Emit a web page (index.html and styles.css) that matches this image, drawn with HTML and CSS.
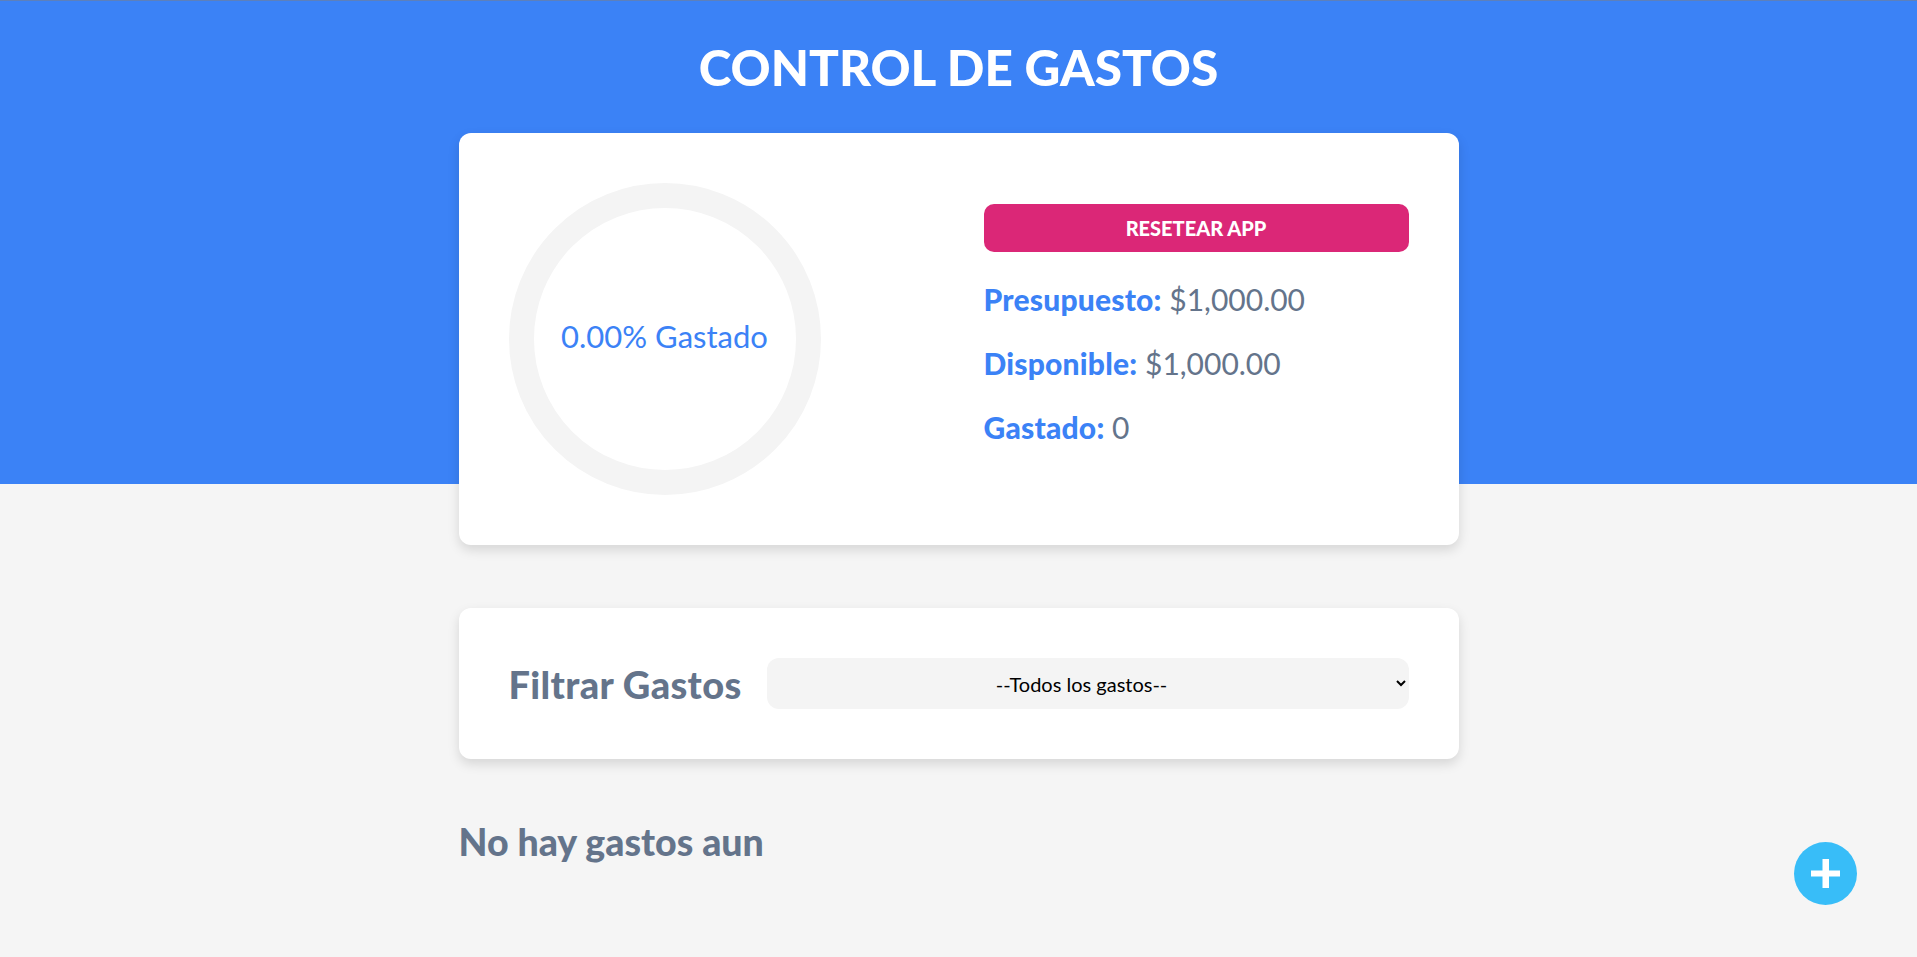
FILE: index.html
```html
<!DOCTYPE html>
<html lang="es">
<head>
<meta charset="UTF-8">
<title>Control de Gastos</title>
<link rel="stylesheet" href="styles.css">
</head>
<body>
<header class="header">
  <h1 class="title">CONTROL DE GASTOS</h1>
</header>
<main class="container">
  <section class="card budget">
    <div class="progress">
      <span class="progress-text">0.00% Gastado</span>
    </div>
    <div class="budget-info">
      <button class="reset" type="button">Resetear App</button>
      <p class="stat"><span class="stat-label">Presupuesto:</span> $1,000.00</p>
      <p class="stat"><span class="stat-label">Disponible:</span> $1,000.00</p>
      <p class="stat"><span class="stat-label">Gastado:</span> 0</p>
    </div>
  </section>
  <section class="card filters">
    <label class="filter-label" for="filtro">Filtrar Gastos</label>
    <select id="filtro" class="filter-select">
      <option>--Todos los gastos--</option>
    </select>
  </section>
  <h2 class="empty">No hay gastos aun</h2>
</main>
<button class="add" type="button" aria-label="Nuevo gasto">
  <svg width="29" height="29" viewBox="0 0 29 29"><rect x="11.5" y="0" width="6.5" height="29" fill="#fff"/><rect x="0" y="11.5" width="29" height="6" fill="#fff"/></svg>
</button>
</body>
</html>
```
FILE: styles.css
```css
* { box-sizing: border-box; }
body {
  margin: 0;
  font-family: Lato, "Noto Sans", sans-serif;
  background: #f5f5f5;
  border-top: 1px solid #5d80bb;
}
.header {
  background: #3b82f6;
  padding: 36px 0 387px;
}
.title {
  margin: 0;
  text-align: center;
  color: #fff;
  font-size: 49.5px;
  font-weight: 900;
  line-height: 60px;
}
.container {
  width: 1000px;
  margin: -351px auto 0;
}
.card {
  background: #fff;
  border-radius: 12px;
  padding: 50px;
  box-shadow: 0 5px 12px rgba(0, 0, 0, 0.13);
}
.budget {
  display: grid;
  grid-template-columns: 1fr 1fr;
  gap: 50px;
  align-items: center;
}
.progress {
  width: 312px;
  height: 312px;
  border: 25px solid #f4f4f4;
  border-radius: 50%;
  display: flex;
  align-items: center;
  justify-content: center;
}
.progress-text {
  color: #3b82f6;
  font-size: 31px;
  margin-top: -6px;
}
.budget-info { display: block; }
.reset {
  display: block;
  width: 100%;
  height: 48px;
  border: none;
  border-radius: 10px;
  background: #db2777;
  color: #fff;
  font-family: Lato, sans-serif;
  font-weight: 900;
  font-size: 20px;
  text-transform: uppercase;
  padding: 0;
}
.stat {
  margin: 30px 0;
  font-size: 30px;
  line-height: 34px;
  color: #64748b;
}
.stat-label {
  color: #3b82f6;
  font-weight: 900;
  letter-spacing: 0.2px;
}
.filters {
  margin-top: 63px;
  display: flex;
  align-items: center;
  gap: 25px;
}
.filter-label {
  font-size: 38px;
  font-weight: 900;
  color: #64748b;
  letter-spacing: 0.35px;
}
.filter-select {
  flex: 1;
  height: 51px;
  border: none;
  border-radius: 12px;
  background: #f4f4f4;
  font-family: Lato, sans-serif;
  font-size: 20px;
  text-align: center;
  color: #000;
  padding: 0 8px;
}
.empty {
  margin: 60px 0 0;
  font-size: 37.5px;
  font-weight: 900;
  color: #64748b;
  line-height: 45px;
}
.add {
  position: fixed;
  right: 60px;
  bottom: 52px;
  width: 63px;
  height: 63px;
  border-radius: 50%;
  border: none;
  background: #38bdf8;
  display: flex;
  align-items: center;
  justify-content: center;
  padding: 0;
}
```
